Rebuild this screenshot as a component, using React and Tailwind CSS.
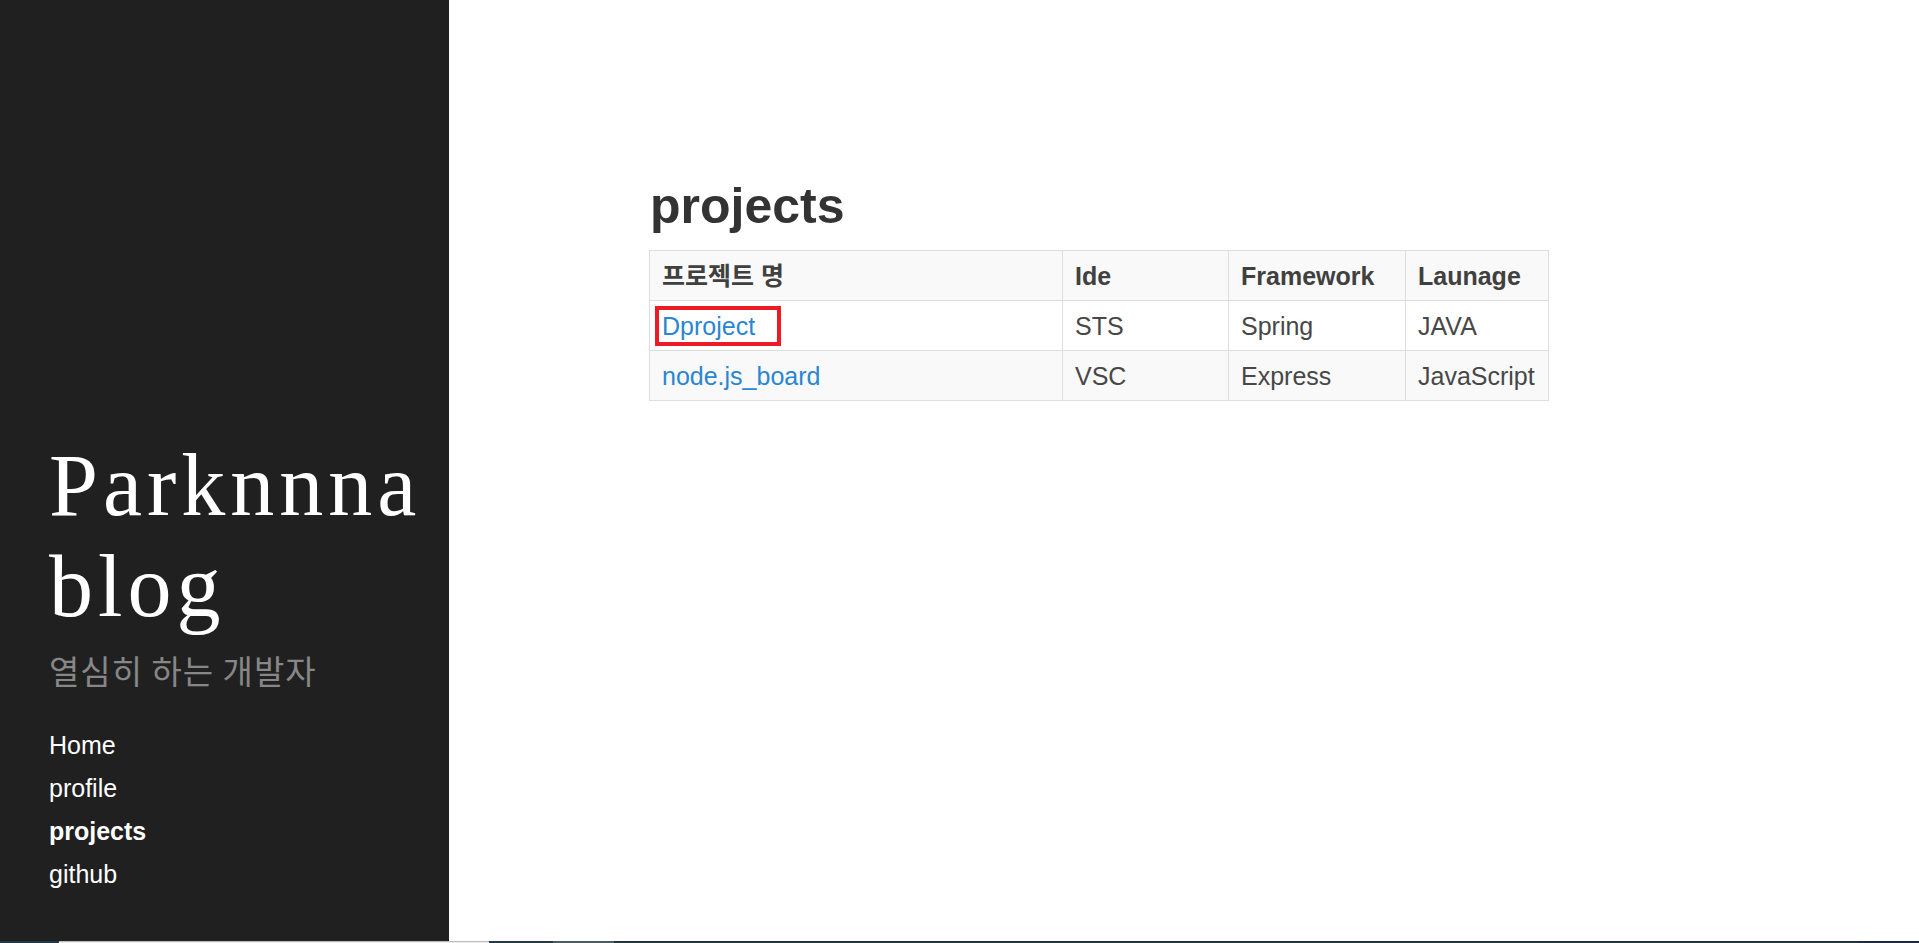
import React from "react";

const projects = [
  { name: "Dproject", ide: "STS", framework: "Spring", lang: "JAVA", marked: true },
  { name: "node.js_board", ide: "VSC", framework: "Express", lang: "JavaScript" },
];

const navItems = [
  { label: "Home" },
  { label: "profile" },
  { label: "projects", active: true },
  { label: "github" },
];

const Sidebar = () => (
  <aside className="w-[449px] shrink-0 bg-[#202020] pl-[49px] pt-[435px]">
    <h1 className="font-['Liberation_Serif',serif] text-[88px] leading-[101px] tracking-[5px] font-normal text-white">
      Parknnna blog
    </h1>
    <p className="mt-[13px] font-['Noto_Sans_CJK_KR',sans-serif] text-[33px] leading-[40px] tracking-[1px] text-[#878787]">
      열심히 하는 개발자
    </p>
    <nav className="mt-[34px] flex flex-col font-['Liberation_Sans',sans-serif] text-[25px] leading-[43px] text-white">
      {navItems.map((item) => (
        <a key={item.label} href="#" className={item.active ? "font-bold" : ""}>
          {item.label}
        </a>
      ))}
    </nav>
  </aside>
);

const cellClass = "border border-[#dedede] px-[12px] pt-[13px] pb-[11px] text-left align-top";

const ProjectTable = () => (
  <table className="w-[899px] table-fixed border-collapse font-['Liberation_Sans',sans-serif] text-[25px] leading-[25px]">
    <colgroup>
      <col className="w-[413px]" />
      <col className="w-[166px]" />
      <col className="w-[177px]" />
      <col className="w-[143px]" />
    </colgroup>
    <thead>
      <tr className="bg-[#f9f9f9] text-[#404040]">
        <th className={`${cellClass} font-bold`}>
          <span className="font-['Liberation_Sans','Noto_Sans_CJK_KR',sans-serif]">프로젝트 명</span>
        </th>
        <th className={`${cellClass} font-bold`}>Ide</th>
        <th className={`${cellClass} font-bold`}>Framework</th>
        <th className={`${cellClass} font-bold`}>Launage</th>
      </tr>
    </thead>
    <tbody className="text-[#474747]">
      {projects.map((p, i) => (
        <tr key={p.name} className={i % 2 === 1 ? "bg-[#f9f9f9]" : "bg-white"}>
          <td className={`${cellClass} relative`}>
            <a href="#" className="text-[#2a86d1]">
              {p.name}
            </a>
            {p.marked && (
              <span className="absolute left-[5px] top-[5px] h-[40px] w-[126px] border-4 border-[#ed1c24]" />
            )}
          </td>
          <td className={cellClass}>{p.ide}</td>
          <td className={cellClass}>{p.framework}</td>
          <td className={cellClass}>{p.lang}</td>
        </tr>
      ))}
    </tbody>
  </table>
);

const App = () => {
  return (
    <div className="flex h-screen flex-col overflow-hidden bg-white">
      <div className="flex min-h-0 flex-1">
        <Sidebar />
        <main className="flex-1 bg-white pl-[200px] pt-[176px]">
          <h2 className="ml-[1px] mb-[14px] font-['Liberation_Sans',sans-serif] text-[50px] font-bold leading-[60px] text-[#333]">
            projects
          </h2>
          <ProjectTable />
        </main>
      </div>
      {/* taskbar edge peeking in at the bottom */}
      <div className="flex h-[2px] shrink-0 bg-[#1f3540]">
        <div className="w-[59px] bg-[#1f3a44]" />
        <div className="w-[430px] border-t border-[#bdbdbd] bg-[#ececec]" />
        <div className="w-[64px] bg-[#233a44]" />
        <div className="w-[61px] bg-[#4d5c63]" />
        <div className="flex-1 bg-[#1f3540]" />
        <div className="w-[60px] bg-[#1c2a44]" />
      </div>
    </div>
  );
};

export default App;
